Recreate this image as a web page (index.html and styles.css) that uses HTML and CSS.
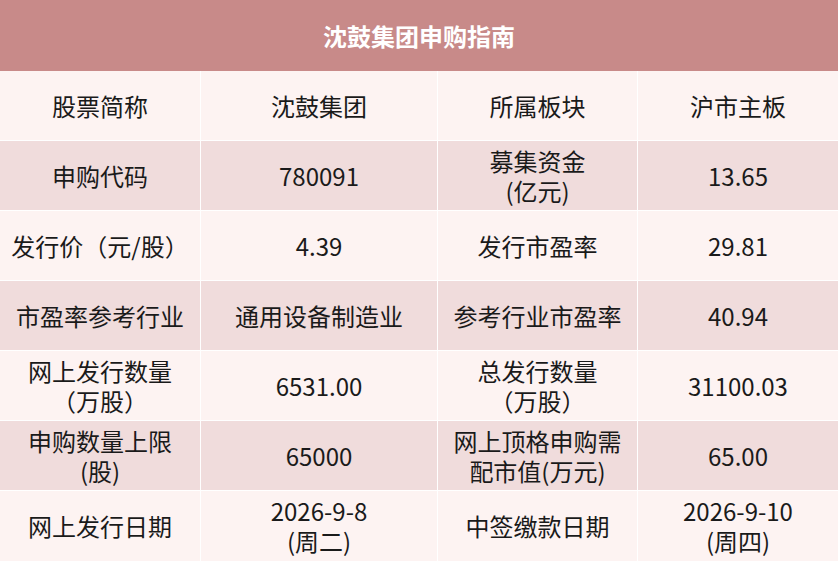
FILE: index.html
```html
<!DOCTYPE html>
<html lang="zh">
<head>
<meta charset="utf-8">
<link rel="stylesheet" href="styles.css">
</head>
<body>
<div class="table">
  <div class="title">沈鼓集团申购指南</div>

  <div class="cell light">股票简称</div>
  <div class="cell light">沈鼓集团</div>
  <div class="cell light">所属板块</div>
  <div class="cell light">沪市主板</div>

  <div class="cell dark">申购代码</div>
  <div class="cell dark">780091</div>
  <div class="cell dark">募集资金<br>(亿元)</div>
  <div class="cell dark">13.65</div>

  <div class="cell light">发行价（元/股）</div>
  <div class="cell light">4.39</div>
  <div class="cell light">发行市盈率</div>
  <div class="cell light">29.81</div>

  <div class="cell dark">市盈率参考行业</div>
  <div class="cell dark">通用设备制造业</div>
  <div class="cell dark">参考行业市盈率</div>
  <div class="cell dark">40.94</div>

  <div class="cell light">网上发行数量<br>（万股）</div>
  <div class="cell light">6531.00</div>
  <div class="cell light">总发行数量<br>（万股）</div>
  <div class="cell light">31100.03</div>

  <div class="cell dark">申购数量上限<br>(股)</div>
  <div class="cell dark">65000</div>
  <div class="cell dark">网上顶格申购需<br>配市值(万元)</div>
  <div class="cell dark">65.00</div>

  <div class="cell light">网上发行日期</div>
  <div class="cell light">2026-9-8<br>(周二)</div>
  <div class="cell light">中签缴款日期</div>
  <div class="cell light">2026-9-10<br>(周四)</div>
</div>
</body>
</html>
```

FILE: styles.css
```css
html, body {
  margin: 0;
  padding: 0;
  background: #ffffff;
}

.table {
  width: 838px;
  height: 561px;
  display: grid;
  grid-template-columns: 200px 236px 199px 200px;
  grid-template-rows: 70px repeat(6, 69px) 1fr;
  column-gap: 1px;
  row-gap: 1px;
  background: #ffffff;
  font-family: "Noto Sans CJK SC", "Noto Sans", sans-serif;
  font-size: 24px;
  line-height: 30px;
  color: #1a1a1a;
}

.title {
  grid-column: 1 / -1;
  background: #c88a89;
  color: #ffffff;
  font-weight: bold;
  display: flex;
  align-items: center;
  justify-content: center;
  margin-bottom: -1px;
}

.cell {
  display: flex;
  align-items: center;
  justify-content: center;
  text-align: center;
}

.light {
  background: #fdf3f2;
}

.dark {
  background: #f0dcdc;
}
```
